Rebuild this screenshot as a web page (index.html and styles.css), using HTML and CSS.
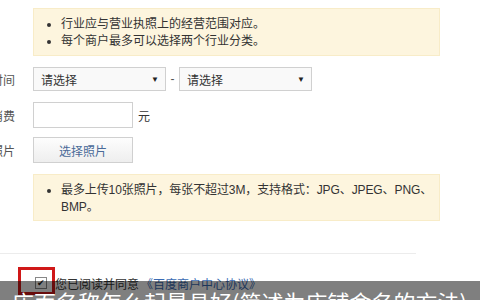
FILE: index.html
```html
<!DOCTYPE html>
<html>
<head>
	<meta charset="utf-8">
	<title>店铺信息</title>
	<link rel="stylesheet" href="styles.css">
</head>
<body>
	<!-- industry tips -->
	<div class="tips tips-top">
		<ul>
			<li>行业应与营业执照上的经营范围对应。</li>
			<li>每个商户最多可以选择两个行业分类。</li>
		</ul>
	</div>

	<!-- form rows -->
	<div class="form-row row-time">
		<div class="label"><span>营业时间</span></div>
		<div class="select"><span>请选择</span><span class="arrow">&#9660;</span></div>
		<span class="dash">-</span>
		<div class="select"><span>请选择</span><span class="arrow">&#9660;</span></div>
	</div>

	<div class="form-row row-price">
		<div class="label"><span>人均消费</span></div>
		<div class="text-input"></div>
		<span class="unit">元</span>
	</div>

	<div class="form-row row-photo">
		<div class="label"><span>店铺照片</span></div>
		<div class="button">选择照片</div>
	</div>

	<div class="tips tips-photo">
		<ul>
			<li>最多上传10张照片，每张不超过3M，支持格式：JPG、JPEG、PNG、BMP。</li>
		</ul>
	</div>

	<div class="divider"></div>

	<!-- agreement -->
	<div class="agree">
		<span class="checkbox">&#10004;</span>
		<span>您已阅读并同意</span><a class="link">《百度商户中心协议》</a>
	</div>

	<!-- annotation and caption over the page -->
	<div class="mark"></div>
	<div class="caption">店面名称怎么起最具好(简述为店铺命名的方法)</div>
</body>
</html>
```

FILE: styles.css
```css
/* page */
body {
	margin: 0;
	font-family: "Liberation Sans", "Noto Sans CJK SC", sans-serif;
	font-size: 12px;
	color: #333;
	background: #fff;
	height: 300px;
	overflow: hidden;
	position: relative;
}

/* yellow tip boxes */
.tips {
	margin-left: 33px;
	width: 407px;
	background-color: #fdf5de;
	border: 1px solid #f8ecc8;
	box-sizing: border-box;
}

.tips ul {
	margin: 0;
	padding: 0 0 0 27px;
	list-style: disc;
}

.tips li {
	line-height: 17px;
}

.tips-top {
	margin-top: 8px;
	height: 48px;
	padding-top: 7px;
}

.tips-photo {
	margin-top: 11px;
	height: 47px;
	padding-top: 7px;
}

.tips-photo li {
	letter-spacing: -0.1px;
}

/* form rows */
.form-row {
	display: flex;
	align-items: center;
}

.row-time {
	margin-top: 11px;
	height: 24px;
}

.row-price {
	margin-top: 11px;
	height: 26px;
}

.row-photo {
	margin-top: 9px;
	height: 26px;
}

.label {
	width: 15px;
	margin-right: 18px;
	display: flex;
	justify-content: flex-end;
	overflow: hidden;
	white-space: nowrap;
	color: #555;
}

.select {
	width: 133px;
	height: 24px;
	box-sizing: border-box;
	border: 1px solid #d0d0d0;
	background: #f9f9f9;
	display: flex;
	align-items: center;
	justify-content: space-between;
	padding: 0 6px 0 7px;
	color: #333;
}

.select .arrow {
	font-size: 8px;
	color: #222;
}

.dash {
	width: 13px;
	text-align: center;
	color: #555;
}

.text-input {
	width: 100px;
	height: 26px;
	box-sizing: border-box;
	border: 1px solid #d0d0d0;
	background: #fff;
}

.unit {
	margin-left: 5px;
}

.button {
	width: 100px;
	height: 26px;
	box-sizing: border-box;
	border: 1px solid #d0d0d0;
	background: linear-gradient(#fdfdfd, #eeeeee);
	color: #4a6a98;
	display: flex;
	align-items: center;
	justify-content: center;
}

/* bottom part */
.divider {
	margin-top: 32px;
	width: 416px;
	height: 1px;
	background: #ececec;
}

.agree {
	margin-top: 22px;
	margin-left: 35px;
	display: flex;
	align-items: center;
	height: 14px;
}

.checkbox {
	width: 10px;
	height: 10px;
	border: 1px solid #888;
	background: #fff;
	font-size: 9px;
	line-height: 10px;
	text-align: center;
	color: #222;
	margin-right: 8px;
}

.link {
	color: #3b6cb4;
	margin-left: 2px;
}

/* red annotation box */
.mark {
	position: absolute;
	left: 18px;
	top: 267px;
	width: 31px;
	height: 22px;
	border: 3px solid #d01818;
}

/* dark caption strip */
.caption {
	position: absolute;
	left: 0;
	right: 0;
	bottom: 0;
	height: 19px;
	overflow: hidden;
	background: rgba(0, 0, 0, 0.5);
	color: #fff;
	font-family: "Noto Sans CJK SC", sans-serif;
	font-size: 22px;
	line-height: 22px;
	padding: 9px 0 0 12px;
	box-sizing: border-box;
	white-space: nowrap;
}
```
